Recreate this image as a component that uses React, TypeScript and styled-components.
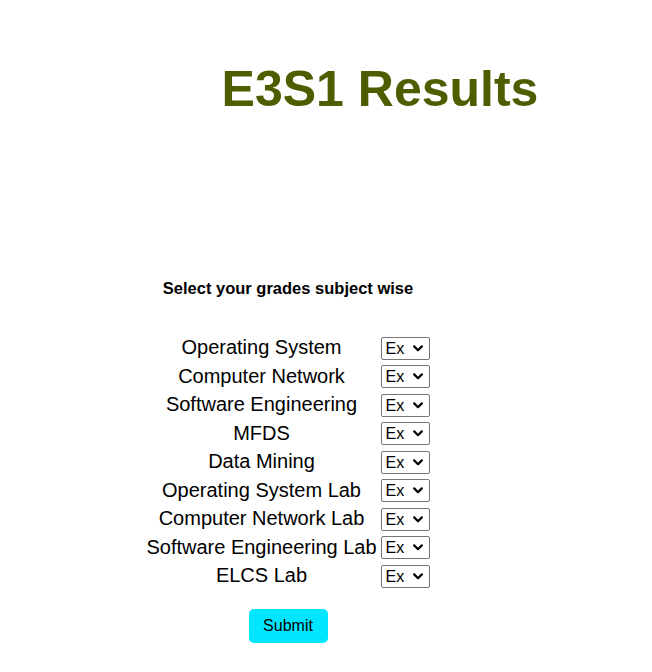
import styled, { createGlobalStyle } from 'styled-components';

const GlobalStyle = createGlobalStyle`
  html, body {
    margin: 0;
    padding: 0;
    background: #ffffff;
    font-family: "Liberation Sans", Arial, sans-serif;
    color: #000000;
  }
`

const Page = styled.div`
  display: flex;
  flex-direction: column;
  width: 652px;
  min-height: 672px;
`
const Heading = styled.h1`
  margin: 0;
  padding: 61px 0 0 108px;
  height: 56px;
  line-height: 56px;
  text-align: center;
  font-size: 50px;
  font-weight: bold;
  color: #4e5d00;
`
const Form = styled.form`
  display: flex;
  flex-direction: column;
  align-items: center;
  width: 284px;
  margin: 162px 0 0 146px;
`
const Caption = styled.div`
  font-size: 16.5px;
  font-weight: bold;
  line-height: 18px;
  margin-bottom: 37px;
  white-space: nowrap;
`
const Grid = styled.div`
  display: grid;
  grid-template-columns: auto auto;
  grid-auto-rows: 28.5px;
  column-gap: 4px;
  align-items: center;
`
const Label = styled.div`
  font-size: 20px;
  line-height: 23px;
  text-align: center;
  margin-top: -1px;
`
const GradeBox = styled.div`
  position: relative;
  width: 49px;
  height: 23px;
`
const Grade = styled.select`
  appearance: none;
  width: 49px;
  height: 23px;
  margin: 0;
  font-family: "Liberation Sans", Arial, sans-serif;
  font-size: 16px;
  color: #000000;
  background: #ffffff;
  border: 1px solid #767676;
  border-radius: 2px;
  padding: 0 0 0 4px;
  outline: none;
`
const Chevron = styled.svg`
  position: absolute;
  right: 7px;
  top: 8px;
  width: 10px;
  height: 7px;
  pointer-events: none;
`
const Submit = styled.button`
  margin-top: 18px;
  width: 79px;
  height: 34px;
  border: none;
  border-radius: 5px;
  background: #00e6ff;
  color: #000000;
  font-family: "Liberation Sans", Arial, sans-serif;
  font-size: 16px;
  cursor: pointer;
`

const subjects = [
  'Operating System',
  'Computer Network',
  'Software Engineering',
  'MFDS',
  'Data Mining',
  'Operating System Lab',
  'Computer Network Lab',
  'Software Engineering Lab',
  'ELCS Lab',
]
const grades = ['Ex', 'A', 'B', 'C', 'D', 'E', 'F']

export default function App() {
  return (
    <>
      <GlobalStyle />
      <Page>
        <Heading>E3S1 Results</Heading>
        <Form onSubmit={e => e.preventDefault()}>
          <Caption>Select your grades subject wise</Caption>
          <Grid>
            {subjects.map(name => [
              <Label key={name + '-l'}>{name}</Label>,
              <GradeBox key={name + '-s'}>
                <Grade defaultValue="Ex">
                  {grades.map(g => <option key={g} value={g}>{g}</option>)}
                </Grade>
                <Chevron viewBox="0 0 10 7">
                  <path d="M1.2 1.4 L5 5.2 L8.8 1.4" fill="none" stroke="#000" strokeWidth="2.2" strokeLinecap="round" strokeLinejoin="round" />
                </Chevron>
              </GradeBox>,
            ])}
          </Grid>
          <Submit type="submit">Submit</Submit>
        </Form>
      </Page>
    </>
  )
}
